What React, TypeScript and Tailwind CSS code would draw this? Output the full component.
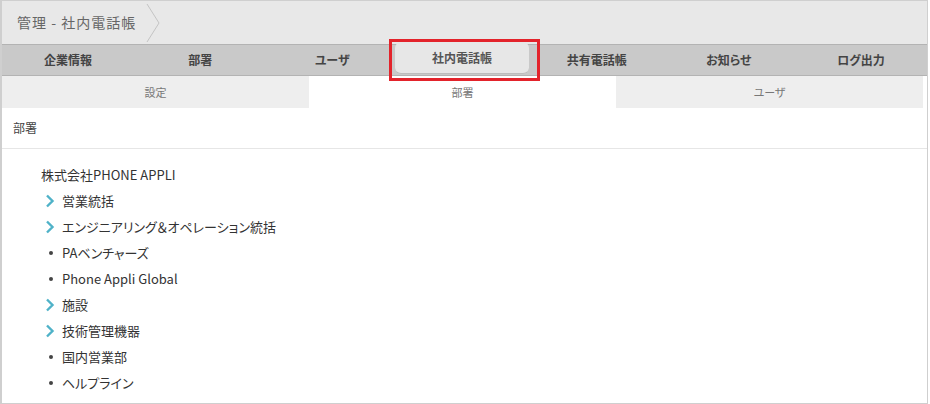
import React from "react";

const tabs = ["企業情報", "部署", "ユーザ", "社内電話帳", "共有電話帳", "お知らせ", "ログ出力"];
const subTabs = ["設定", "部署", "ユーザ"];

type Node = { label: string; folder: boolean };

const nodes: Node[] = [
  { label: "営業統括", folder: true },
  { label: "エンジニアリング＆オペレーション統括", folder: true },
  { label: "PAベンチャーズ", folder: false },
  { label: "Phone Appli Global", folder: false },
  { label: "施設", folder: true },
  { label: "技術管理機器", folder: true },
  { label: "国内営業部", folder: false },
  { label: "ヘルプライン", folder: false },
];

const Chevron = () => (
  <svg width="10" height="14" viewBox="0 0 10 14" className="shrink-0">
    <polyline points="2,1.5 7.5,7 2,12.5" fill="none" stroke="#4fb2c8" strokeWidth="2.4" />
  </svg>
);

const App = () => {
  return (
    <div
      className="w-[930px] h-[404px] overflow-hidden bg-white [font-feature-settings:'palt']"
      style={{ fontFamily: '"Noto Sans CJK JP", "Noto Sans", sans-serif' }}
    >
      <div className="w-[928px] h-[404px] border-l-2 border-r border-b border-t border-[#cfcfcf] flex flex-col">
        {/* breadcrumb */}
        <div className="h-[43px] bg-[#e8e8e8] flex items-center pl-[15px] shrink-0">
          <span className="text-[14px] text-[#666] tracking-[1px]">管理 - 社内電話帳</span>
          <svg width="16" height="40" viewBox="0 0 16 40" className="ml-[10px]">
            <polyline points="1,1 13,20 1,39" fill="none" stroke="#c4c4c4" strokeWidth="1" />
          </svg>
        </div>

        {/* main tabs */}
        <div className="h-[32px] bg-[#c9c9c9] border-t border-b border-[#b3b3b3] grid grid-cols-7 shrink-0">
          {tabs.map((t, i) =>
            i === 3 ? (
              <div key={t} className="relative">
                <div className="absolute left-[-3px] right-[2px] top-[-3px] bottom-[1px] bg-[#e7e7e7] rounded-[6px] border-b border-[#bdbdbd] flex items-center justify-center text-[12px] font-bold text-[#555]">
                  {t}
                </div>
                <div className="absolute left-[-9px] right-[-9px] top-[-6px] bottom-[-6px] border-[3px] border-[#e3232b]" />
              </div>
            ) : (
              <div key={t} className="flex items-center justify-center text-[12px] font-bold text-[#444]">
                {t}
              </div>
            )
          )}
        </div>

        {/* sub tabs */}
        <div className="h-[32px] grid grid-cols-3 pr-[4px] shrink-0">
          {subTabs.map((t, i) => (
            <div
              key={t}
              className={`flex items-center justify-center text-[11px] text-[#777] ${i === 1 ? "bg-white" : "bg-[#eeeeee]"}`}
            >
              {t}
            </div>
          ))}
        </div>

        {/* section heading */}
        <div className="h-[41px] border-b border-[#e6e6e6] flex items-center pl-[11px] text-[12px] text-[#444] shrink-0">
          部署
        </div>

        {/* tree */}
        <div className="pl-[39px] pt-[13px] text-[13px] text-[#333]">
          <div className="h-[26px] flex items-center">株式会社PHONE APPLI</div>
          {nodes.map((n) => (
            <div key={n.label} className="h-[26px] flex items-center">
              <div className="w-[21px] flex items-center pl-[4px]">
                {n.folder ? <Chevron /> : <div className="w-[4px] h-[4px] rounded-full bg-[#444] ml-[4px]" />}
              </div>
              <span>{n.label}</span>
            </div>
          ))}
        </div>
      </div>
    </div>
  );
};

export default App;
